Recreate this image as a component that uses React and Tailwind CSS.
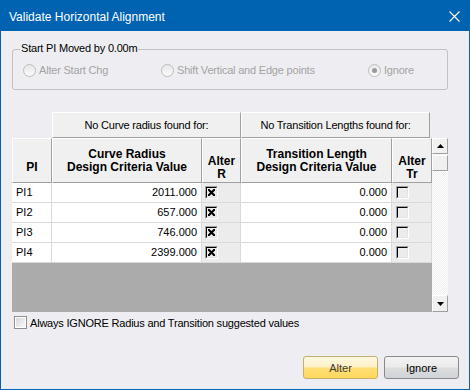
import React from "react";

function Radio({ checked }) {
  return (
    <div className="w-[13px] h-[13px] rounded-full border border-[#BCBCBC] bg-[linear-gradient(to_bottom,#E8E8E8,#FAFAFA)] flex items-center justify-center shrink-0">
      {checked && <div className="w-[5px] h-[5px] rounded-full bg-[#9A9A9A]" />}
    </div>
  );
}

function Check3D({ checked }) {
  return (
    <div className="w-[13px] h-[13px] border border-t-[#A0A0A0] border-l-[#A0A0A0] border-r-white border-b-white shrink-0">
      <div className="w-full h-full border border-t-black border-l-black border-r-[#E3E3E3] border-b-[#E3E3E3] flex items-center justify-center">
        {checked && (
          <svg width="7" height="7" viewBox="0 0 7 7">
            <path d="M0.5 0.5L6.5 6.5M6.5 0.5L0.5 6.5" stroke="black" strokeWidth="2.1" strokeLinecap="square" />
          </svg>
        )}
      </div>
    </div>
  );
}

const rows = [
  ["PI1", "2011.000"],
  ["PI2", "657.000"],
  ["PI3", "746.000"],
  ["PI4", "2399.000"],
];

const hdr =
  "flex flex-col items-center justify-center bg-[#F0F0F0] border border-t-white border-l-white border-r-[#A0A0A0] border-b-[#A0A0A0] font-bold text-[12px] leading-[13px] text-center text-black";

const raised =
  "bg-[#F0F0F0] border border-t-white border-l-white border-r-[#A0A0A0] border-b-[#A0A0A0]";

export default function App() {
  return (
    <div className="w-[470px] h-[390px] bg-[#0063B1] flex flex-col font-['Liberation_Sans',Arial,sans-serif] text-black select-none">
      {/* Title bar */}
      <div className="h-[31px] flex items-center justify-between pt-[2px] shrink-0">
        <span className="pl-[9px] text-[12px] leading-[14px] text-white">Validate Horizontal Alignment</span>
        <svg className="mr-[10px] mb-[1px]" width="11" height="11" viewBox="0 0 11 11">
          <path d="M0.5 0.5L10.5 10.5M10.5 0.5L0.5 10.5" stroke="white" strokeWidth="1.1" />
        </svg>
      </div>

      {/* Body */}
      <div className="flex-1 mx-[1px] mb-[1px] bg-[#EEEEF2] flex flex-col">
        {/* Group box */}
        <div className="relative mt-[18px] ml-[11px] w-[436px] h-[41px] border border-[#C2C2C2] rounded-[3px]">
          <span className="absolute -top-[9px] left-[7px] px-[1px] bg-[#EEEEF2] text-[11px] leading-[14px] tracking-[-0.2px]">
            Start PI Moved by 0.00m
          </span>
          <div className="h-full flex items-center pt-[1px] pl-[10px] text-[11px] leading-[14px] tracking-[-0.2px] text-[#A3A3A3]">
            <div className="w-[138px] flex items-center gap-[3px]">
              <Radio />
              <span>Alter Start Chg</span>
            </div>
            <div className="w-[207px] flex items-center gap-[3px]">
              <Radio />
              <span>Shift Vertical and Edge points</span>
            </div>
            <div className="flex items-center gap-[3px]">
              <Radio checked />
              <span>Ignore</span>
            </div>
          </div>
        </div>

        {/* Top header row */}
        <div className="mt-[22px] ml-[51px] flex h-[26px] text-[11px] leading-[14px] tracking-[-0.2px]">
          <div className={"w-[189px] flex items-center justify-center " + raised}>No Curve radius found for:</div>
          <div className={"w-[189px] flex items-center justify-center " + raised}>No Transition Lengths found for:</div>
        </div>

        {/* Grid */}
        <div className="ml-[11px] w-[436px] h-[174px] flex">
          <div className="w-[420px] flex flex-col">
            <div className="flex h-[45px]">
              <div className={"w-[40px] pt-[14px] " + hdr}>PI</div>
              <div className={"w-[150px] " + hdr}>
                <span>Curve Radius</span>
                <span>Design Criteria Value</span>
              </div>
              <div className={"w-[39px] pt-[14px] " + hdr}>
                <span>Alter</span>
                <span>R</span>
              </div>
              <div className={"w-[151px] " + hdr}>
                <span>Transition Length</span>
                <span>Design Criteria Value</span>
              </div>
              <div className={"w-[40px] pt-[14px] " + hdr}>
                <span>Alter</span>
                <span>Tr</span>
              </div>
            </div>
            {rows.map(([pi, val]) => (
              <div key={pi} className="flex h-[20px] text-[11px] leading-[14px]">
                <div className="w-[40px] bg-white border-r border-b border-[#DADADA] flex items-center pl-[4px] pb-[1px]">{pi}</div>
                <div className="w-[150px] bg-white border-r border-b border-[#DADADA] flex items-center justify-end pr-[4px] pb-[1px]">{val}</div>
                <div className="w-[39px] bg-[#ECECEC] border-r border-b border-[#DADADA] flex items-center pl-[3px]">
                  <Check3D checked />
                </div>
                <div className="w-[151px] bg-white border-r border-b border-[#DADADA] flex items-center justify-end pr-[4px] pb-[1px]">0.000</div>
                <div className="w-[40px] bg-[#ECECEC] border-r border-b border-[#DADADA] flex items-center pl-[4px]">
                  <Check3D />
                </div>
              </div>
            ))}
            <div className="flex-1 bg-[#ABABAB]" />
          </div>

          {/* Scrollbar */}
          <div className="w-[16px] flex flex-col bg-[repeating-conic-gradient(#EEEEEE_0%_25%,#FFFFFF_0%_50%)] bg-[length:2px_2px]">
            <div className={"h-[16px] flex items-center justify-center " + raised}>
              <svg width="7" height="4" viewBox="0 0 7 4">
                <path d="M3.5 0L7 4H0Z" fill="black" />
              </svg>
            </div>
            <div className={"h-[16px] mt-[1px] " + raised} />
            <div className="flex-1" />
            <div className={"h-[17px] flex items-center justify-center border-r-[#696969] border-b-[#696969] " + raised}>
              <svg width="7" height="4" viewBox="0 0 7 4">
                <path d="M0 0H7L3.5 4Z" fill="black" />
              </svg>
            </div>
          </div>
        </div>

        {/* Always ignore checkbox */}
        <div className="mt-[3px] ml-[13px] flex items-center gap-[3px] text-[11px] leading-[14px] tracking-[-0.2px]">
          <div className="w-[13px] h-[13px] border border-[#8E8F8F] bg-white p-[1px] shrink-0">
            <div className="w-full h-full bg-[linear-gradient(135deg,#D8D8D8,#F8F8F8)]" />
          </div>
          <span className="pt-[1px]">Always IGNORE Radius and Transition suggested values</span>
        </div>

        {/* Buttons */}
        <div className="mt-[26px] mr-[10px] flex justify-end gap-[6px] text-[11px] leading-[14px]">
          <div className="w-[75px] h-[23px] rounded-[3px] border border-[#C5AE6E] bg-[linear-gradient(to_bottom,#FFF9E3_0%,#FFF0C4_48%,#FFDF78_52%,#FFD75C_100%)] flex items-center justify-center text-[#3C3C3C]">
            Alter
          </div>
          <div className="w-[75px] h-[23px] rounded-[3px] border border-[#8A8A8A] bg-[linear-gradient(to_bottom,#F3F3F3_0%,#EBEBEB_48%,#DDDDDD_52%,#CFD3D8_100%)] flex items-center justify-center">
            Ignore
          </div>
        </div>
      </div>
    </div>
  );
}
